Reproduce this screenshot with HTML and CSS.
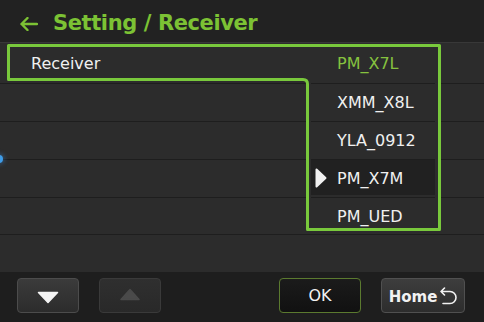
FILE: index.html
```html
<!DOCTYPE html>
<html>
<head>
<meta charset="utf-8">
<link rel="stylesheet" href="styles.css">
</head>
<body>
<div class="screen">
  <header class="topbar">
    <svg class="back" width="18" height="14" viewBox="0 0 18 14">
      <path d="M1.5 7 H17 M7.5 1 L1.5 7 L7.5 13" fill="none" stroke="#7cc234" stroke-width="2.4" stroke-linecap="round" stroke-linejoin="round"/>
    </svg>
    <h1 class="title">Setting / Receiver</h1>
  </header>
  <main class="list">
    <div class="row row-first">
      <span class="label">Receiver</span>
      <span class="value">PM_X7L</span>
    </div>
    <div class="row"></div>
    <div class="row"></div>
    <div class="row"></div>
    <div class="row row-last"></div>
    <div class="filler"></div>
    <span class="scroll-dot"></span>
    <ul class="dropdown">
      <li class="item">XMM_X8L</li>
      <li class="item">YLA_0912</li>
      <li class="item active">
        <svg class="pointer" width="12" height="20" viewBox="0 0 12 20"><path d="M1.5 1.5 L10.5 10 L1.5 18.5 Z" fill="#f2f2f2" stroke="#f2f2f2" stroke-width="2" stroke-linejoin="round"/></svg>
        PM_X7M
      </li>
      <li class="item item-last">PM_UED</li>
    </ul>
  </main>
  <footer class="toolbar">
    <button class="btn btn-arrow">
      <svg width="22" height="13" viewBox="0 0 22 13"><path d="M1.5 1.5 H20.5 L11 11.5 Z" fill="#f4f4f4" stroke="#f4f4f4" stroke-width="1.5" stroke-linejoin="round"/></svg>
    </button>
    <button class="btn btn-arrow btn-disabled">
      <svg width="22" height="13" viewBox="0 0 22 13"><path d="M2 11.5 H20 L11 1.5 Z" fill="#4a4a4a" stroke="#4a4a4a" stroke-width="1.5" stroke-linejoin="round"/></svg>
    </button>
    <button class="btn btn-ok">OK</button>
    <button class="btn btn-home">
      <span>Home</span>
      <svg width="18" height="18" viewBox="0 0 18 18"><path d="M2 4.5 H11 A6 6 0 0 1 11 16.5 H4 M5.5 1 L2 4.5 L5.5 8" fill="none" stroke="#f2f2f2" stroke-width="1.6" stroke-linecap="round" stroke-linejoin="round"/></svg>
    </button>
  </footer>
  <svg class="focus-outline" width="484" height="322" viewBox="0 0 484 322">
    <path d="M8.5 45.5 H439.5 V229.5 H307.5 V84 Q307.5 79.5 303 79.5 H8.5 Z" fill="none" stroke="#79c93c" stroke-width="3" stroke-linejoin="round"/>
  </svg>
</div>
</body>
</html>
```
FILE: styles.css
```css
* { box-sizing: border-box; }
html, body { margin: 0; padding: 0; background: #2c2c2c; }
body { font-family: "DejaVu Sans", Verdana, sans-serif; color: #f0f0f0; }

.screen {
  position: relative;
  width: 484px;
  height: 322px;
  overflow: hidden;
  display: flex;
  flex-direction: column;
  background: #2c2c2c;
}

.topbar {
  height: 43px;
  flex: none;
  background: #222222;
  border-bottom: 1px solid #383838;
  display: flex;
  align-items: flex-start;
  padding: 5px 0 0 20px;
  gap: 15px;
}
.back { margin-top: 12px; flex: none; }
.title {
  margin: 0;
  font-size: 21px;
  font-weight: bold;
  line-height: 37px;
  letter-spacing: -0.4px;
  color: #7cc234;
}

.list {
  position: relative;
  flex: 1;
  display: flex;
  flex-direction: column;
  background: #2c2c2c;
}
.row {
  height: 38px;
  flex: none;
  border-bottom: 1px solid #1e1e1e;
  display: grid;
  grid-template-columns: 307px 1fr;
  font-size: 16px;
}
.row-first { height: 41px; padding-top: 2px; line-height: 38px; }
.row-last { height: 37px; }
.label { padding-left: 31px; color: #f0f0f0; }
.value { padding-left: 30px; color: #86c23f; }
.filler { flex: 1; }

.scroll-dot {
  position: absolute;
  left: -5px;
  top: 112px;
  width: 8px;
  height: 8px;
  border-radius: 50%;
  background: #3e9ce8;
  box-shadow: 0 0 4px 2px rgba(60, 130, 200, 0.35);
}

.dropdown {
  position: absolute;
  left: 309px;
  top: 38px;
  width: 129px;
  height: 147px;
  margin: 0;
  padding: 2px 3px 0 2px;
  list-style: none;
  background: #2c2c2c;
}
.item {
  position: relative;
  height: 38px;
  border-top: 1px solid #1e1e1e;
  padding-left: 26px;
  font-size: 16px;
  line-height: 37px;
  color: #f0f0f0;
}
.item-last { height: 31px; }
.item.active {
  background: linear-gradient(#212121, #212121) no-repeat;
  background-size: 100% 35px;
}
.pointer { position: absolute; left: 4px; top: 8px; }

.toolbar {
  height: 50px;
  flex: none;
  background: #1e1e1e;
  display: flex;
  align-items: flex-start;
  padding: 6px 19px 9px 17px;
  gap: 20px;
}
.btn {
  height: 35px;
  margin: 0;
  padding: 0;
  border: 1px solid #4c4c4c;
  border-radius: 4px;
  background: linear-gradient(#3b3b3b, #2c2c2c);
  display: flex;
  align-items: center;
  justify-content: center;
  font-family: "DejaVu Sans", Verdana, sans-serif;
  color: #f2f2f2;
}
.btn-arrow { width: 62px; }
.btn-arrow svg { margin-top: 3px; }
.btn-disabled {
  border-color: #3a3a3a;
  background: linear-gradient(#2f2f2f, #292929);
}
.btn-disabled svg { margin-top: -3px; }
.btn-ok {
  width: 82px;
  margin-left: auto;
  border-color: #5b7a2f;
  background: linear-gradient(#1b1b1b, #111111);
  font-size: 16px;
}
.btn-home {
  width: 84px;
  gap: 2px;
  font-size: 15px;
  font-weight: bold;
  border-color: #505050;
  background: linear-gradient(#3d3d3d, #2d2d2d);
}
.btn-home span { margin-top: 2px; }

.focus-outline {
  position: absolute;
  left: 0;
  top: 0;
  pointer-events: none;
}
```
